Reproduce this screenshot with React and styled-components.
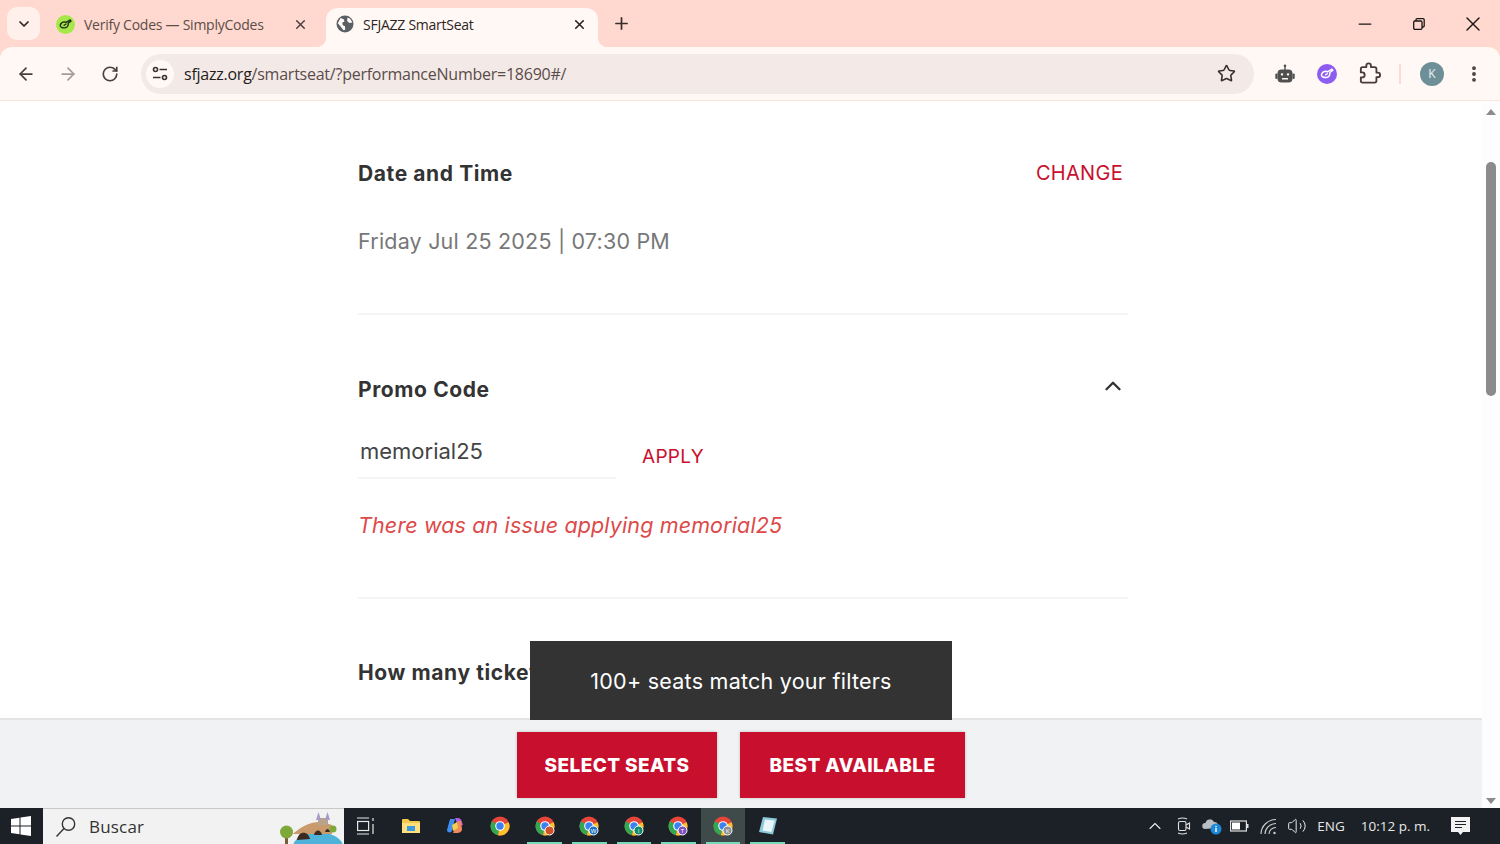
import React from 'react'
import styled, { createGlobalStyle } from 'styled-components'
import { ArrowLeft, ArrowRight, RotateCw, ChevronDown, ChevronUp, X, Plus, Minus, Star, EllipsisVertical, Volume2 } from 'lucide-react'

const GlobalStyle = createGlobalStyle`
  html, body { margin: 0; padding: 0; height: 100%; overflow: hidden; }
  body { font-family: 'Open Sans', sans-serif; background: #fff; }
  * { box-sizing: border-box; }
`

const Screen = styled.div`
  width: 1500px;
  height: 844px;
  display: flex;
  flex-direction: column;
  overflow: hidden;
  background: #ffd9cf;
`

/* browser chrome */
const TabStrip = styled.div`
  height: 47px;
  flex: none;
  display: flex;
  align-items: flex-end;
  padding-left: 7px;
`
const TabMenu = styled.div`
  width: 33px;
  height: 33px;
  margin-bottom: 7px;
  border-radius: 10px;
  background: #fff0eb;
  display: flex;
  align-items: center;
  justify-content: center;
  color: #2b2320;
`
const Tab = styled.div`
  height: 39px;
  width: ${p => p.$width}px;
  margin-left: ${p => p.$left}px;
  padding: 0 ${p => p.$right}px 7px ${p => p.$pad}px;
  display: flex;
  align-items: center;
  position: relative;
  border-radius: 12px 12px 0 0;
  background: ${p => (p.$active ? '#fff8f5' : 'transparent')};
  color: ${p => (p.$active ? '#2d2523' : '#5c4c48')};
  font-size: 14px;
  letter-spacing: -0.25px;
  ${p =>
    p.$active &&
    `&::before, &::after {
      content: '';
      position: absolute;
      bottom: 0;
      width: 10px;
      height: 10px;
    }
    &::before {
      left: -10px;
      background: radial-gradient(circle at 0 0, transparent 10px, #fff8f5 10.5px);
    }
    &::after {
      right: -10px;
      background: radial-gradient(circle at 100% 0, transparent 10px, #fff8f5 10.5px);
    }`}
`
const TabTitle = styled.span`
  flex: 1;
  margin-left: ${p => p.$gap}px;
  white-space: nowrap;
`
const NewTab = styled.div`
  margin: 0 0 14px 14px;
  height: 20px;
  display: flex;
  align-items: center;
  color: #3a2f2c;
`
const WindowControls = styled.div`
  margin-left: auto;
  height: 47px;
  display: flex;
  align-items: center;
  color: #1a1614;
`
const WindowButton = styled.div`
  width: 54px;
  display: flex;
  justify-content: center;
`
const Toolbar = styled.div`
  height: 54px;
  flex: none;
  background: #fff8f5;
  border-radius: 12px 12px 0 0;
  border-bottom: 1px solid #fbe6df;
  display: flex;
  align-items: center;
  padding: 0 16px;
`
const NavButton = styled.div`
  width: 20px;
  display: flex;
  justify-content: center;
  margin-right: ${p => p.$gap}px;
  color: ${p => p.$color || '#4a3f3c'};
`
const Omnibox = styled.div`
  width: 1113px;
  height: 40px;
  margin-left: 21px;
  border-radius: 20px;
  background: #f3e9e7;
  display: flex;
  align-items: center;
  padding: 0 18px 0 5px;
`
const SiteInfo = styled.div`
  width: 28px;
  height: 28px;
  border-radius: 50%;
  background: #fff8f5;
  display: flex;
  align-items: center;
  justify-content: center;
`
const Url = styled.div`
  margin-left: 10px;
  flex: 1;
  font-size: 16px;
  letter-spacing: -0.24px;
  color: #5a4c49;
  b { font-weight: 400; color: #241c1a; }
`
const ToolIcons = styled.div`
  display: flex;
  align-items: center;
  margin-left: 20px;
`
const ToolIcon = styled.div`
  width: 22px;
  height: 22px;
  margin-right: ${p => p.$gap}px;
  display: flex;
  align-items: center;
  justify-content: center;
`
const ToolDivider = styled.div`
  width: 2px;
  height: 20px;
  background: #fbdcd3;
  margin-right: 19px;
`
const Avatar = styled.div`
  width: 24px;
  height: 24px;
  border-radius: 50%;
  background: #6f8f98;
  color: #e9f1f3;
  font-size: 12px;
  display: flex;
  align-items: center;
  justify-content: center;
  margin-right: 20px;
`

/* page */
const Viewport = styled.div`
  flex: 1;
  position: relative;
  display: flex;
  overflow: hidden;
  background: #fff;
`
const Page = styled.div`
  flex: 1;
  padding: 0 0 0 358px;
`
const Column = styled.div`
  width: 770px;
`
const Section = styled.section`
  height: ${p => p.$height}px;
  padding-top: ${p => p.$top}px;
  border-bottom: ${p => (p.$line ? '2px solid #f4f4f4' : 'none')};
`
const HeadRow = styled.div`
  display: flex;
  justify-content: space-between;
  align-items: flex-start;
  padding-right: ${p => p.$right}px;
`
const Heading = styled.h2`
  margin: 0;
  font-family: Inter, sans-serif;
  font-weight: 700;
  font-size: 21px;
  line-height: 28px;
  letter-spacing: 0.6px;
  color: #333;
`
const Collapse = styled(ChevronUp)`
  margin-top: -3px;
`
const LinkText = styled.span`
  font-family: Inter, sans-serif;
  font-weight: 400;
  font-size: ${p => p.$size}px;
  line-height: 26px;
  letter-spacing: 0.3px;
  color: #c8102e;
`
const DateLine = styled.div`
  margin-top: 38px;
  font-family: Inter, sans-serif;
  font-weight: 400;
  font-size: 21.500px;
  line-height: 30px;
  letter-spacing: 0.2px;
  color: #777;
`
const PromoRow = styled.div`
  display: flex;
  align-items: flex-end;
  margin-top: 24px;
`
const PromoInput = styled.div`
  width: 258px;
  height: 51px;
  padding: 8px 0 0 2px;
  border-bottom: 2px solid #f4f4f4;
  font-family: Inter, sans-serif;
  font-weight: 400;
  font-size: 22px;
  line-height: 30px;
  color: #444;
`
const ApplyLink = styled(LinkText)`
  margin: 0 0 9px 26px;
`
const ErrorText = styled.div`
  margin-top: 31px;
  font-family: Inter, sans-serif;
  font-style: italic;
  font-weight: 400;
  font-size: 21.500px;
  line-height: 30px;
  letter-spacing: 0.13px;
  color: #dc4a4a;
`
const Scrollbar = styled.div`
  width: 18px;
  flex: none;
  background: #fdfdfd;
  display: flex;
  flex-direction: column;
  align-items: center;
  padding-top: 8px;
`
const ScrollThumb = styled.div`
  width: 10px;
  height: 234px;
  margin-top: 47px;
  border-radius: 5px;
  background: #8b8b8b;
`
const Arrow = styled.div`
  width: 0;
  height: 0;
  border-left: 5.500px solid transparent;
  border-right: 5.500px solid transparent;
  border-${p => (p.$down ? 'top' : 'bottom')}: 6px solid #8b8b8b;
  ${p => p.$down && 'margin-top: auto; margin-bottom: 4px;'}
`
const Toast = styled.div`
  position: absolute;
  left: 530px;
  top: 540px;
  width: 422px;
  height: 79px;
  background: #333;
  color: #fff;
  display: flex;
  align-items: center;
  justify-content: center;
  font-family: Inter, sans-serif;
  font-weight: 400;
  font-size: 21.500px;
  letter-spacing: 0.25px;
  z-index: 2;
`
const ActionBar = styled.div`
  position: absolute;
  left: 0;
  right: 18px;
  bottom: 0;
  height: 90px;
  background: #f0f2f4;
  border-top: 2px solid #e4e4e4;
  display: flex;
  justify-content: center;
  padding-top: 12px;
  gap: 23px;
`
const ActionButton = styled.div`
  width: ${p => p.$width}px;
  height: 66px;
  background: #c8102e;
  color: #fff;
  display: flex;
  align-items: center;
  justify-content: center;
  font-family: Inter, sans-serif;
  font-weight: 800;
  font-size: 19px;
  letter-spacing: 0.4px;
  box-shadow: 0 0 3px rgba(0, 0, 0, 0.2);
`

/* taskbar */
const Taskbar = styled.div`
  height: 36px;
  flex: none;
  background: #1b2126;
  display: flex;
  align-items: center;
  color: #e8e8e8;
`
const StartButton = styled.div`
  width: 43px;
  height: 36px;
  display: flex;
  align-items: center;
  justify-content: center;
  padding-right: 2px;
`
const SearchBox = styled.div`
  width: 301px;
  height: 36px;
  background: #f2f2f2;
  border-top: 1px solid #c8c8c8;
  position: relative;
  display: flex;
  align-items: center;
  padding-left: 12px;
  color: #333;
  font-size: 17px;
  letter-spacing: 0.2px;
  overflow: hidden;
  span { margin-left: 12px; }
`
const BridgeArt = styled.svg`
  position: absolute;
  right: 0;
  top: 0;
`
const Apps = styled.div`
  display: flex;
  height: 36px;
`
const AppSlot = styled.div`
  width: 44.600px;
  height: 36px;
  position: relative;
  display: flex;
  align-items: center;
  justify-content: center;
  background: ${p => (p.$active ? '#3f4a4a' : 'transparent')};
  ${p =>
    p.$open &&
    `&::after {
      content: '';
      position: absolute;
      left: 5px;
      right: 5px;
      bottom: 0;
      height: 2px;
      background: #76d9b8;
    }`}
`
const Tray = styled.div`
  margin-left: auto;
  display: flex;
  align-items: center;
  height: 36px;
  font-size: 13.500px;
  padding-right: 30px;
`
const TrayItem = styled.div`
  display: flex;
  align-items: center;
  margin-right: ${p => p.$gap}px;
  white-space: nowrap;
`

const Globe = () => (
  <svg width="18" height="18" viewBox="0 0 18 18">
    <circle cx="9" cy="9" r="8.500" fill="#5a5f63" />
    <path d="M4.500 3l3.200 1.200.8 2.300-2.300 1.300.6 2.400 2.200 1 .2 3.500-1.700.6L4.200 11 1.800 8.300zM11.500 2.500l2.700 1.300 2.200 3.700-3 .6-2.300-2.200z" fill="#fff8f5" />
  </svg>
)

const SimplyMark = ({ bg, size, color }) => (
  <svg width={size} height={size} viewBox="0 0 20 20">
    <circle cx="10" cy="10" r="10" fill={bg} />
    <path d="M4.500 10.500c.5-1.800 2.600-3.300 4.500-3.300l1.500.6L15 5.200l.8 1.300-3 2c.5 2-.5 4.500-3.300 5-2.700.4-5.500-.7-5-3z" fill="none" stroke={color} strokeWidth="1.500" strokeLinejoin="round" />
    <path d="M8 11.200l3-1.900" stroke={color} strokeWidth="1.300" />
  </svg>
)

const TuneIcon = () => (
  <svg width="16" height="16" viewBox="0 0 16 16" fill="none" stroke="#3a2f2c" strokeWidth="1.600">
    <circle cx="3.500" cy="3.500" r="2" />
    <path d="M7.500 3.500H15M1 11.500h7.500" />
    <circle cx="12.500" cy="11.500" r="2" />
  </svg>
)

const Robot = () => (
  <svg width="20" height="20" viewBox="0 0 20 20">
    <circle cx="10" cy="1.800" r="1.300" fill="#505050" />
    <rect x="9.300" y="2" width="1.400" height="4" fill="#505050" />
    <rect x="2.500" y="5.500" width="15" height="13" rx="4" fill="#505050" />
    <rect x="0.300" y="9.500" width="2.200" height="5.500" rx="1" fill="#505050" />
    <rect x="17.500" y="9.500" width="2.200" height="5.500" rx="1" fill="#505050" />
    <rect x="5.800" y="9.200" width="2.400" height="2.400" rx="1" fill="#fff8f5" />
    <rect x="11.800" y="9.200" width="2.400" height="2.400" rx="1" fill="#fff8f5" />
    <rect x="7" y="14" width="6" height="1.500" fill="#fff8f5" />
  </svg>
)

const ExtensionIcon = () => (
  <svg width="23" height="23" viewBox="0 0 24 24" fill="none" stroke="#4a3a36" strokeWidth="2" strokeLinejoin="round">
    <path d="M20.500 11H19V7c0-1.100-.9-2-2-2h-4V3.500C13 2.120 11.880 1 10.500 1S8 2.120 8 3.500V5H4c-1.100 0-2 .9-2 2v3.800h1.500c1.490 0 2.700 1.210 2.700 2.700s-1.210 2.700-2.700 2.700H2V20c0 1.100.9 2 2 2h13c1.100 0 2-.9 2-2v-4h1.500c1.380 0 2.500-1.120 2.500-2.500S21.880 11 20.500 11z" />
  </svg>
)

const RestoreIcon = () => (
  <svg width="12" height="12" viewBox="0 0 12 12" fill="none" stroke="#1a1614" strokeWidth="1.300">
    <rect x="0.700" y="3" width="8.300" height="8.300" rx="1.200" />
    <path d="M3 3V1.800A1.100 1.100 0 0 1 4.100.700h6a1.100 1.100 0 0 1 1.100 1.100v6A1.100 1.100 0 0 1 10.100 9H9" />
  </svg>
)

const WindowsLogo = () => (
  <svg width="20" height="20" viewBox="0 0 20 20" fill="#fff">
    <path d="M0 3l8.500-1.200v7.700H0zM9.500 1.600L20 0v9.500H9.500zM0 10.500h8.500v7.700L0 17zM9.500 10.500H20V20L9.500 18.400z" />
  </svg>
)

const SearchGlass = () => (
  <svg width="22" height="22" viewBox="0 0 22 22" fill="none" stroke="#333" strokeWidth="1.400">
    <circle cx="13.500" cy="8" r="6.200" />
    <path d="M9 12.500L1.500 20.500" />
  </svg>
)

const Bridge = () => (
  <BridgeArt viewBox="0 0 66 35" width="66" height="35">
    <ellipse cx="40" cy="38" rx="25" ry="15" fill="#4fb3d9" />
    <path d="M13 27c8-9 20-15 31-14l10 3v9H13z" fill="#c99a6b" />
    <path d="M19 31c1-9 11-10 13-1zM36 26c1-6 7-6 8 0zM47 23c1-4 4-4 5 0z" fill="#3b2a1f" />
    <rect x="40" y="9" width="10" height="7" fill="#b8a48c" />
    <path d="M38 11l2.500-8 2.500 8zM47 11l2.500-8 2.500 8z" fill="#a79ac8" />
    <rect x="7" y="27" width="3" height="8" fill="#7a5a3a" />
    <circle cx="8.500" cy="23" r="6.500" fill="#7fa83a" />
    <circle cx="55" cy="20" r="3.500" fill="#7fa83a" />
  </BridgeArt>
)

const TaskView = () => (
  <svg width="20" height="18" viewBox="0 0 20 18" fill="none" stroke="#e8e8e8" strokeWidth="1.200">
    <path d="M1 1h12M1 17h12" />
    <rect x="1.600" y="4.500" width="11" height="9" />
    <path d="M17 1v3M17 7v10" />
  </svg>
)

const Folder = () => (
  <svg width="18" height="16" viewBox="0 0 18 16">
    <path d="M0 2a1 1 0 0 1 1-1h5l2 2h9a1 1 0 0 1 1 1v11H0z" fill="#f5c84c" />
    <rect x="0" y="5" width="18" height="10" fill="#ffdf7e" />
    <rect x="5" y="8" width="8" height="5" fill="#3d9ae0" />
  </svg>
)

const Copilot = () => (
  <svg width="18" height="18" viewBox="0 0 18 18">
    <path d="M4 2h5L6 14c-1 2-5 2-5-1z" fill="#3f8df0" />
    <path d="M9 1h3c2 0 3 1 4 4l1 3-5 1z" fill="#b65ce0" />
    <path d="M12 4h3l1 8c0 3-3 4-5 4H7z" fill="#f08a5d" />
    <path d="M6 8l5-3 1 6-5 3z" fill="#f2d14e" />
  </svg>
)

const Chrome = ({ badge, text }) => (
  <svg width="20" height="20" viewBox="0 0 20 20">
    <circle cx="10" cy="10" r="9.500" fill="#e7453a" />
    <path d="M10 10L1.800 5.200A9.500 9.500 0 0 0 8 19.300z" fill="#33a852" />
    <path d="M10 10l8.700-3.800A9.500 9.500 0 0 1 8 19.300z" fill="#fbc02d" />
    <circle cx="10" cy="10" r="4.800" fill="#fff" />
    <circle cx="10" cy="10" r="3.700" fill="#3b82f0" />
    {badge && <circle cx="14.500" cy="14.500" r="4.500" fill={badge} stroke="#fff" strokeWidth="1" />}
    {text && (
      <text x="14.500" y="16.800" fontSize="6" fontFamily="Open Sans" fill="#fff" textAnchor="middle">
        {text}
      </text>
    )}
  </svg>
)

const Notepad = () => (
  <svg width="20" height="20" viewBox="0 0 20 20">
    <path d="M5 1l14 1.500-4 16L1 16z" fill="#8cc9d8" />
    <path d="M7 3.500l9.500 1L13.500 16 4.500 14.500z" fill="#e8f6f9" />
  </svg>
)

const Meet = () => (
  <svg width="18" height="18" viewBox="0 0 18 18" fill="none" stroke="#e0e0e0" strokeWidth="1.100">
    <rect x="3.500" y="4.500" width="7.500" height="9" rx="1.500" />
    <path d="M11 8l3.500-2v6L11 10M3 2c3-1.300 6-1.300 9 0M3 16c3 1.300 6 1.300 9 0" />
  </svg>
)

const CloudInfo = () => (
  <svg width="20" height="18" viewBox="0 0 20 18">
    <path d="M3 12a3 3 0 0 1 .5-6A4.500 4.500 0 0 1 12 5a3.500 3.500 0 0 1 3 6z" fill="#b9bec2" />
    <circle cx="14" cy="12" r="5.500" fill="#1e88d8" />
    <rect x="13.300" y="11" width="1.400" height="4" fill="#fff" />
    <rect x="13.300" y="8.800" width="1.400" height="1.400" fill="#fff" />
  </svg>
)

const Battery = () => (
  <svg width="19" height="12" viewBox="0 0 19 12">
    <rect x="0.600" y="1" width="15.800" height="10" fill="none" stroke="#e0e0e0" strokeWidth="1.200" />
    <rect x="2" y="2.500" width="8" height="7" fill="#fff" />
    <rect x="17" y="4" width="1.500" height="4" fill="#e0e0e0" />
  </svg>
)

const Wifi = () => (
  <svg width="17" height="17" viewBox="0 0 17 17" fill="none" stroke="#d0d0d0" strokeWidth="1.100">
    <path d="M1 16C1 8 8 1.500 16 1.500M5 16c0-5.500 5-10.500 11-10.500M9 16c0-3.500 3-6.500 7-6.500" />
    <circle cx="14.500" cy="15" r="1.200" fill="#d0d0d0" stroke="none" />
  </svg>
)

const Notifications = () => (
  <svg width="19" height="19" viewBox="0 0 19 19">
    <path d="M0 0h19v15h-7l-2.500 3L7 15H0z" fill="#f2f2f2" />
    <path d="M4 4.500h11M4 7.500h11M4 10.500h7" stroke="#1b2126" strokeWidth="1.100" />
  </svg>
)

export default function App() {
  return (
    <Screen>
      <GlobalStyle />
      <TabStrip>
        <TabMenu>
          <ChevronDown size={16} strokeWidth={2.6} />
        </TabMenu>
        <Tab $width={276} $left={10} $pad={6} $right={18}>
          <SimplyMark bg="#a6e84a" size={19} color="#22301a" />
          <TabTitle $gap={9}>Verify Codes — SimplyCodes</TabTitle>
          <X size={15} strokeWidth={2.4} color="#4a3f3c" />
        </Tab>
        <Tab $width={272} $left={0} $pad={10} $right={11} $active>
          <Globe />
          <TabTitle $gap={9}>SFJAZZ SmartSeat</TabTitle>
          <X size={15} strokeWidth={2.6} color="#2b2320" />
        </Tab>
        <NewTab>
          <Plus size={19} strokeWidth={2.2} />
        </NewTab>
        <WindowControls>
          <WindowButton>
            <Minus size={20} strokeWidth={1.5} />
          </WindowButton>
          <WindowButton>
            <RestoreIcon />
          </WindowButton>
          <WindowButton>
            <X size={24} strokeWidth={1.4} />
          </WindowButton>
        </WindowControls>
      </TabStrip>
      <Toolbar>
        <NavButton $gap={22}>
          <ArrowLeft size={20} strokeWidth={2.1} />
        </NavButton>
        <NavButton $gap={22} $color="#a89a96">
          <ArrowRight size={20} strokeWidth={2.1} />
        </NavButton>
        <NavButton $gap={0}>
          <RotateCw size={18} strokeWidth={2.2} />
        </NavButton>
        <Omnibox>
          <SiteInfo>
            <TuneIcon />
          </SiteInfo>
          <Url>
            <b>sfjazz.org</b>/smartseat/?performanceNumber=18690#/
          </Url>
          <Star size={19} strokeWidth={2} color="#3a2f2c" />
        </Omnibox>
        <ToolIcons>
          <ToolIcon $gap={20}>
            <Robot />
          </ToolIcon>
          <ToolIcon $gap={21}>
            <SimplyMark bg="#8d5cf0" size={20} color="#fff" />
          </ToolIcon>
          <ToolIcon $gap={18}>
            <ExtensionIcon />
          </ToolIcon>
          <ToolDivider />
          <Avatar>K</Avatar>
          <EllipsisVertical size={20} strokeWidth={2.6} color="#4a3f3c" />
        </ToolIcons>
      </Toolbar>
      <Viewport>
        <Page>
          <Column>
            <Section $height={214} $top={59} $line>
              <HeadRow $right={5}>
                <Heading>Date and Time</Heading>
                <LinkText $size={20}>CHANGE</LinkText>
              </HeadRow>
              <DateLine>Friday Jul 25 2025 | 07:30 PM</DateLine>
            </Section>
            <Section $height={284} $top={61} $line>
              <HeadRow $right={2}>
                <Heading>Promo Code</Heading>
                <Collapse size={26} strokeWidth={2.2} color="#333" />
              </HeadRow>
              <PromoRow>
                <PromoInput>memorial25</PromoInput>
                <ApplyLink $size={19}>APPLY</ApplyLink>
              </PromoRow>
              <ErrorText>There was an issue applying memorial25</ErrorText>
            </Section>
            <Section $height={100} $top={60}>
              <Heading>How many tickets?</Heading>
            </Section>
          </Column>
        </Page>
        <Scrollbar>
          <Arrow />
          <ScrollThumb />
          <Arrow $down />
        </Scrollbar>
        <Toast>100+ seats match your filters</Toast>
        <ActionBar>
          <ActionButton $width={200}>SELECT SEATS</ActionButton>
          <ActionButton $width={225}>BEST AVAILABLE</ActionButton>
        </ActionBar>
      </Viewport>
      <Taskbar>
        <StartButton>
          <WindowsLogo />
        </StartButton>
        <SearchBox>
          <SearchGlass />
          <span>Buscar</span>
          <Bridge />
        </SearchBox>
        <Apps>
          <AppSlot>
            <TaskView />
          </AppSlot>
          <AppSlot>
            <Folder />
          </AppSlot>
          <AppSlot>
            <Copilot />
          </AppSlot>
          <AppSlot>
            <Chrome />
          </AppSlot>
          <AppSlot $open>
            <Chrome badge="#d2502a" />
          </AppSlot>
          <AppSlot $open>
            <Chrome badge="#1a73c8" text="W" />
          </AppSlot>
          <AppSlot $open>
            <Chrome badge="#0f8a6a" text="I" />
          </AppSlot>
          <AppSlot $open>
            <Chrome badge="#7b4fc0" text="T" />
          </AppSlot>
          <AppSlot $open $active>
            <Chrome badge="#8a8f94" text="K" />
          </AppSlot>
          <AppSlot $open>
            <Notepad />
          </AppSlot>
        </Apps>
        <Tray>
          <TrayItem $gap={10}>
            <ChevronUp size={20} strokeWidth={1.3} />
          </TrayItem>
          <TrayItem $gap={9}>
            <Meet />
          </TrayItem>
          <TrayItem $gap={8}>
            <CloudInfo />
          </TrayItem>
          <TrayItem $gap={11}>
            <Battery />
          </TrayItem>
          <TrayItem $gap={10}>
            <Wifi />
          </TrayItem>
          <TrayItem $gap={10}>
            <Volume2 size={20} strokeWidth={1.2} />
          </TrayItem>
          <TrayItem $gap={16}>ENG</TrayItem>
          <TrayItem $gap={21}>10:12 p. m.</TrayItem>
          <TrayItem $gap={0}>
            <Notifications />
          </TrayItem>
        </Tray>
      </Taskbar>
    </Screen>
  )
}
